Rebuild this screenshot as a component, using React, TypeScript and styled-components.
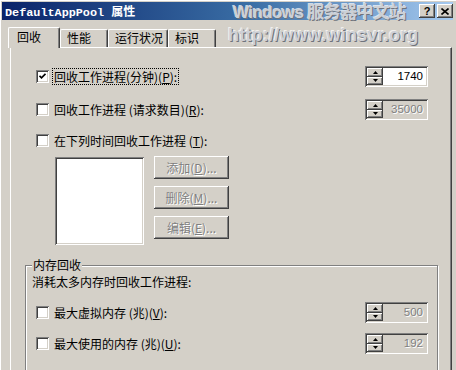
import React from 'react';
import styled, { createGlobalStyle } from 'styled-components';

const GlobalStyle = createGlobalStyle`
  html, body {
    margin: 0;
    padding: 0;
    background: #d4d0c8;
  }
  body {
    width: 456px;
    height: 370px;
    overflow: hidden;
    font-family: "Noto Sans CJK SC", "Liberation Sans", sans-serif;
    font-size: 12px;
    color: #000;
  }
`;

const raised = `
  box-shadow: inset -1px -1px 0 #404040, inset 1px 1px 0 #ffffff,
    inset -2px -2px 0 #808080, inset 2px 2px 0 #d4d0c8;
`;

const sunken = `
  box-shadow: inset 1px 1px 0 #808080, inset -1px -1px 0 #ffffff,
    inset 2px 2px 0 #404040, inset -2px -2px 0 #d4d0c8;
`;

const Window = styled.div`
  position: relative;
  width: 456px;
  height: 370px;
  box-sizing: border-box;
  padding: 2px 3px 0 2px;
  background: #d4d0c8;
  box-shadow: inset 1px 1px 0 #ffffff;
  display: flex;
  flex-direction: column;
  overflow: hidden;
`;

const TitleBar = styled.div`
  height: 18px;
  flex-shrink: 0;
  display: flex;
  align-items: center;
  padding: 0 0 0 3px;
  background: linear-gradient(90deg, #0a246a 0%, #3a6ea5 55%, #a6caf0 100%);
  color: #fff;
`;

const TitleText = styled.div`
  flex: 1;
  font-family: "Liberation Mono", monospace;
  font-weight: bold;
  font-size: 11.8px;
  white-space: pre;
  span {
    font-family: "Noto Sans CJK SC", sans-serif;
    font-size: 12px;
  }
`;

const TitleButton = styled.div`
  width: 16px;
  height: 14px;
  margin-left: 2px;
  background: #d4d0c8;
  ${raised}
  display: flex;
  align-items: center;
  justify-content: center;
  color: #000;
  font-family: "Liberation Sans", sans-serif;
  font-weight: bold;
  font-size: 11px;
  line-height: 1;
`;

const Watermark = styled.div`
  position: absolute;
  left: 228px;
  top: 2px;
  z-index: 5;
  pointer-events: none;
  font-family: "Liberation Sans", "Noto Sans CJK SC", sans-serif;
  font-weight: bold;
  color: #cdd0d6;
  text-shadow: 1px 1px 0 #6f737c, -1px -1px 0 rgba(255, 255, 255, 0.7);
  white-space: pre;
`;

const WatermarkLine = styled.div<{ $size: number; $spacing: number; $indent: number }>`
  font-size: ${p => p.$size}px;
  line-height: 22px;
  letter-spacing: ${p => p.$spacing}px;
  padding-left: ${p => p.$indent}px;
`;

const Body = styled.div`
  flex: 1;
  display: flex;
  flex-direction: column;
  padding: 7px 1px 0 6px;
`;

const TabStrip = styled.div`
  display: flex;
  align-items: flex-end;
  height: 21px;
  margin-bottom: -1px;
  position: relative;
  z-index: 1;
`;

const Tab = styled.div<{ $active?: boolean }>`
  box-sizing: border-box;
  height: ${p => (p.$active ? 21 : 18)}px;
  min-width: ${p => (p.$active ? 52 : 48)}px;
  margin-bottom: ${p => (p.$active ? 0 : 1)}px;
  padding: ${p => (p.$active ? '1px 4px 0 8px' : '0 4px 0 6px')};
  background: #d4d0c8;
  border-top: 1px solid #fff;
  border-left: 1px solid #fff;
  border-right: 1px solid #404040;
  border-radius: 2px 2px 0 0;
  box-shadow: inset -1px 0 0 #808080;
  font-size: 12px;
  line-height: 16px;
  white-space: nowrap;
`;

const TabPage = styled.div`
  flex: 1;
  margin-left: 2px;
  border-top: 1px solid #fff;
  border-left: 1px solid #fff;
  border-right: 1px solid #404040;
  box-shadow: inset -1px 0 0 #808080;
  padding: 18px 13px 0 14px;
  display: flex;
  flex-direction: column;
`;

const TopSection = styled.div`
  padding: 0 10px 0 11px;
`;

const OptionRow = styled.div<{ $gap?: number }>`
  display: flex;
  align-items: center;
  justify-content: space-between;
  height: 21px;
  margin-top: ${p => p.$gap ?? 0}px;
`;

const CheckLabel = styled.div`
  display: flex;
  align-items: center;
  gap: 3px;
`;

const Box = styled.div`
  width: 13px;
  height: 13px;
  background: #fff;
  ${sunken}
  display: flex;
  align-items: center;
  justify-content: center;
`;

const LabelText = styled.span<{ $focus?: boolean }>`
  border: 1px ${p => (p.$focus ? 'dotted #000' : 'solid transparent')};
  padding: 0 1px;
  line-height: 15px;
  white-space: nowrap;
`;

const SpinBox = styled.div<{ $disabled?: boolean }>`
  box-sizing: border-box;
  width: 63px;
  height: 21px;
  padding: 2px;
  background: ${p => (p.$disabled ? '#d4d0c8' : '#fff')};
  ${sunken}
  display: flex;
`;

const SpinButtons = styled.div`
  width: 16px;
  display: flex;
  flex-direction: column;
`;

const SpinButton = styled.div`
  flex: 1;
  background: #d4d0c8;
  ${raised}
  display: flex;
  align-items: center;
  justify-content: center;
`;

const SpinValue = styled.div<{ $disabled?: boolean }>`
  flex: 1;
  text-align: right;
  padding-right: 3px;
  font-family: "Liberation Sans", sans-serif;
  font-size: 11.5px;
  line-height: 17px;
  color: ${p => (p.$disabled ? '#808080' : '#000')};
  text-shadow: ${p => (p.$disabled ? '1px 1px 0 #fff' : 'none')};
`;

const ScheduleBlock = styled.div`
  display: flex;
  gap: 10px;
  margin-top: 6px;
  padding-left: 19px;
`;

const ListBox = styled.div`
  width: 89px;
  height: 88px;
  background: #fff;
  ${sunken}
`;

const ButtonColumn = styled.div`
  display: flex;
  flex-direction: column;
  gap: 7px;
  margin-top: -1px;
`;

const Button = styled.div`
  box-sizing: border-box;
  width: 75px;
  height: 23px;
  background: #d4d0c8;
  ${raised}
  display: flex;
  align-items: center;
  justify-content: center;
  color: #808080;
  text-shadow: 1px 1px 0 #fff;
  font-size: 12px;
  white-space: nowrap;
`;

const GroupBox = styled.fieldset`
  margin: 13px 0 0 0;
  padding: 0 9px 30px 6px;
  min-width: 0;
  border: 1px solid #808080;
  box-shadow: inset 1px 1px 0 #fff, 1px 1px 0 #fff;
`;

const GroupTitle = styled.legend`
  padding: 0 1px;
  line-height: 14px;
  font-size: 12px;
  background: #d4d0c8;
  position: relative;
`;

const GroupText = styled.div`
  margin-top: 2px;
  line-height: 16px;
`;

const GroupRows = styled.div`
  padding-left: 4px;
`;

const Check = () => (
  <svg width="7" height="7" viewBox="0 0 7 7">
    <polyline points="0.5,2.8 2.5,4.8 6.5,0.8" fill="none" stroke="#000" strokeWidth="1.7" />
  </svg>
);

const Arrow = ({ up }: { up?: boolean }) => (
  <svg width="5" height="3" viewBox="0 0 5 3">
    <polygon points={up ? '2.5,0 5,3 0,3' : '0,0 5,0 2.5,3'} fill="#000" />
  </svg>
);

const CheckBox = (prop: { checked?: boolean; focus?: boolean; children: React.ReactNode }) => (
  <CheckLabel>
    <Box>{prop.checked ? <Check /> : null}</Box>
    <LabelText $focus={prop.focus}>{prop.children}</LabelText>
  </CheckLabel>
);

const Spin = (prop: { value: string; disabled?: boolean }) => (
  <SpinBox $disabled={prop.disabled}>
    <SpinButtons>
      <SpinButton><Arrow up /></SpinButton>
      <SpinButton><Arrow /></SpinButton>
    </SpinButtons>
    <SpinValue $disabled={prop.disabled}>{prop.value}</SpinValue>
  </SpinBox>
);

export default function App() {
  return (
    <>
      <GlobalStyle />
      <Window>
        <TitleBar>
          <TitleText>DefaultAppPool <span>属性</span></TitleText>
          <TitleButton>?</TitleButton>
          <TitleButton>
            <svg width="8" height="7" viewBox="0 0 8 7">
              <path d="M0.5 0.5 L7.5 6.5 M7.5 0.5 L0.5 6.5" stroke="#000" strokeWidth="1.6" />
            </svg>
          </TitleButton>
        </TitleBar>
        <Watermark>
          <WatermarkLine $size={17} $spacing={-0.6} $indent={5}>Windows 服务器中文站</WatermarkLine>
          <WatermarkLine $size={18} $spacing={0.2} $indent={0}>http://www.winsvr.org</WatermarkLine>
        </Watermark>
        <Body>
          <TabStrip>
            <Tab $active>回收</Tab>
            <Tab>性能</Tab>
            <Tab>运行状况</Tab>
            <Tab>标识</Tab>
          </TabStrip>
          <TabPage>
            <TopSection>
              <OptionRow>
                <CheckBox checked focus>回收工作进程(分钟)(<u>P</u>):</CheckBox>
                <Spin value="1740" />
              </OptionRow>
              <OptionRow $gap={12}>
                <CheckBox>回收工作进程 (请求数目)(<u>R</u>):</CheckBox>
                <Spin value="35000" disabled />
              </OptionRow>
              <OptionRow $gap={10}>
                <CheckBox>在下列时间回收工作进程 (<u>T</u>):</CheckBox>
              </OptionRow>
              <ScheduleBlock>
                <ListBox />
                <ButtonColumn>
                  <Button>添加(<u>D</u>)...</Button>
                  <Button>删除(<u>M</u>)...</Button>
                  <Button>编辑(<u>E</u>)...</Button>
                </ButtonColumn>
              </ScheduleBlock>
            </TopSection>
            <GroupBox>
              <GroupTitle>内存回收</GroupTitle>
              <GroupText>消耗太多内存时回收工作进程:</GroupText>
              <GroupRows>
                <OptionRow $gap={12}>
                  <CheckBox>最大虚拟内存 (兆)(<u>V</u>):</CheckBox>
                  <Spin value="500" disabled />
                </OptionRow>
                <OptionRow $gap={10}>
                  <CheckBox>最大使用的内存 (兆)(<u>U</u>):</CheckBox>
                  <Spin value="192" disabled />
                </OptionRow>
              </GroupRows>
            </GroupBox>
          </TabPage>
        </Body>
      </Window>
    </>
  );
}
